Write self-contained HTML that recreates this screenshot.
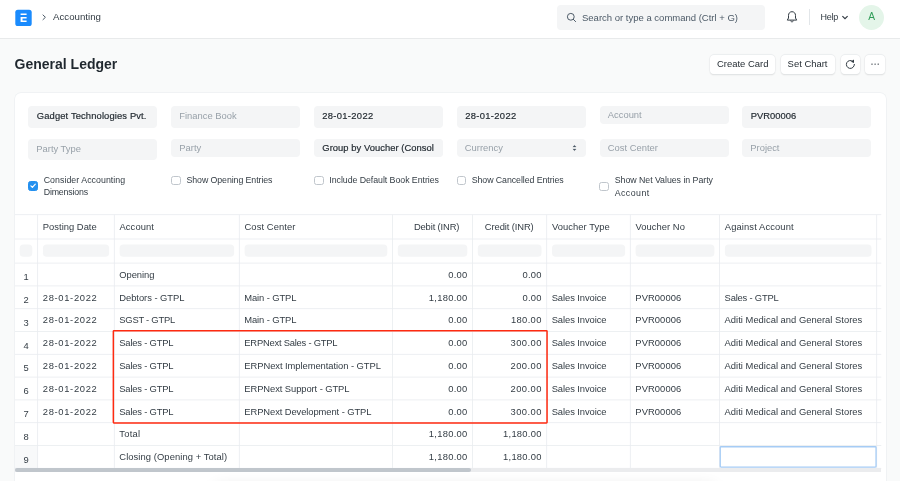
<!DOCTYPE html>
<html><head><meta charset="utf-8"><title>General Ledger</title>
<style>
*{box-sizing:border-box;margin:0;padding:0}
html,body{width:900px;height:481px;overflow:hidden;background:#f9fafa;font-family:"Liberation Sans",sans-serif;font-size:9.4px;color:#1f272e}
.abs,.abs *{position:absolute}
div,span,svg{position:absolute}
.nav{left:0;top:0;width:900px;height:38.5px;background:#fff;border-bottom:1px solid #e8eaeb}
.t{white-space:nowrap;line-height:12px}
.inp{background:#f4f5f6;border-radius:4px;overflow:hidden}
.inp .t{left:8.8px}
.inp .ph{left:8.3px}
.ph{color:#98a1a9}
.val{color:#1f272e;-webkit-text-stroke:0.18px #1f272e}
.btn{background:#fff;border-radius:4px;box-shadow:0 0 0 0.4px #e6e9ec,0 0.6px 1.6px rgba(0,0,0,.13);}
.cb{width:9.5px;height:9.5px;border:1px solid #c0c6cc;border-radius:2.5px;background:#fff}
.card{left:14.5px;top:92.5px;width:871px;height:400px;background:#fff;border-radius:6px;box-shadow:0 0 0 0.7px #edf0f2,0 1px 2px rgba(0,0,0,.04)}
.vl{width:1px;background:#eff1f3}
.hl{height:1px;background:#eff1f3}
.cell{white-space:nowrap;line-height:12px;color:#333c44}
.num{letter-spacing:.36px}
.date{letter-spacing:.62px}
.pill{background:#f4f5f6;border-radius:4px;height:11.9px;top:244.4px}
body{will-change:transform}
</style></head><body>

<div class="nav"></div>
<svg style="left:15px;top:9px" width="18" height="18" viewBox="0 0 18 18"><g transform="translate(0.30 0.70)"><rect width="16.4" height="16.4" rx="2.6" fill="#1a8bfd"/><path d="M5.3 3.9h6v1.4h-6zM5.3 7.2h6v1.7H7.2v1.8h4.1v1.7h-6z" fill="#fff"/></g></svg>
<svg style="left:41px;top:13px" width="7" height="9" viewBox="0 0 7 9"><g transform="translate(0.30 0.30)"><path d="M1.4 1.4L4.1 4 1.4 6.6" fill="none" stroke="#4c5a67" stroke-width="1"/></g></svg>
<span class="t" style="left:53px;top:11.3px;font-size:9.7px;color:#333c44">Accounting</span>
<div class="inp" style="left:557px;top:5px;width:207.5px;height:24.5px;border-radius:4px"></div>
<svg style="left:566px;top:12px" width="11" height="11" viewBox="0 0 11 11"><g transform="translate(0.00 0.00)"><circle cx="4.8" cy="4.8" r="3.4" fill="none" stroke="#4c5a67" stroke-width="1"/><path d="M7.3 7.3L9.6 9.6" stroke="#4c5a67" stroke-width="1" stroke-linecap="round"/></g></svg>
<span class="t" style="left:582px;top:12.1px;font-size:9.5px;color:#4c5a67">Search or type a command (Ctrl + G)</span>
<svg style="left:786px;top:10px" width="12" height="15" viewBox="0 0 12 15"><g transform="translate(0.00 0.50)"><path d="M6 1.2c-2.1 0-3.5 1.6-3.5 3.7v2.6L1.3 9.6h9.4L9.5 7.5V4.9C9.5 2.8 8.1 1.2 6 1.2z" fill="none" stroke="#333c44" stroke-width="1" stroke-linejoin="round"/><path d="M4.8 10.4c.2.7.6 1 1.2 1s1-.3 1.2-1" fill="none" stroke="#333c44" stroke-width="1" stroke-linecap="round"/></g></svg>
<div style="left:809px;top:9px;width:1px;height:16px;background:#e2e6e9"></div>
<span class="t" style="left:820.5px;top:11.4px;font-size:9px;letter-spacing:-0.22px;color:#333c44">Help</span>
<svg style="left:841px;top:14px" width="8" height="7" viewBox="0 0 8 7"><g transform="translate(0.00 0.50)"><path d="M1.4 1.6L4 4.1 6.6 1.6" fill="none" stroke="#333c44" stroke-width="1.2"/></g></svg>
<div style="left:859px;top:4.5px;width:25px;height:25px;border-radius:50%;background:#e4f5e9"></div>
<span class="t" style="left:868.3px;top:11.2px;font-size:10.2px;color:#2f9d58">A</span>
<span class="t" style="left:14.6px;top:55.2px;font-size:14px;line-height:18px;font-weight:bold;color:#1f272e">General Ledger</span>
<div class="btn" style="left:710px;top:54.8px;width:65.20000000000005px;height:18.9px"></div>
<span class="t" style="left:717px;top:58px;font-size:9.45px;color:#1f272e">Create Card</span>
<div class="btn" style="left:780.5px;top:54.8px;width:54.700000000000045px;height:18.9px"></div>
<span class="t" style="left:787.6px;top:58px;font-size:9.45px;color:#1f272e">Set Chart</span>
<div class="btn" style="left:840.8px;top:54.8px;width:19.200000000000045px;height:18.9px"></div>
<div class="btn" style="left:865.4px;top:54.8px;width:19.5px;height:18.9px"></div>
<svg style="left:844px;top:58px" width="13" height="13" viewBox="0 0 13 13"><g transform="translate(0.40 0.40)"><path d="M10 6A4 4 0 1 1 8.5 2.9" fill="none" stroke="#333c44" stroke-width="1" stroke-linecap="round"/><path d="M9.6 1v3.5L6.5 3.4z" fill="#333c44"/></g></svg>
<svg style="left:870px;top:62px" width="10" height="4" viewBox="0 0 10 4"><g transform="translate(0.00 0.70)"><rect x="1.4" y=".9" width="1.2" height="1.2" rx=".3" fill="#333c44"/><rect x="4.5" y=".9" width="1.2" height="1.2" rx=".3" fill="#333c44"/><rect x="7.6" y=".9" width="1.2" height="1.2" rx=".3" fill="#333c44"/></g></svg>
<div class="card"></div>
<div class="inp" style="left:28px;top:105.5px;width:129.3px;height:22.0px"><span class="t val" style="letter-spacing:0.13px;top:4.40px">Gadget Technologies Pvt.</span></div>
<div class="inp" style="left:171px;top:105.5px;width:129.3px;height:22.0px"><span class="t ph" style="top:4.40px">Finance Book</span></div>
<div class="inp" style="left:313.5px;top:105.5px;width:129.3px;height:22.0px"><span class="t val" style="letter-spacing:0.32px;top:4.40px">28-01-2022</span></div>
<div class="inp" style="left:456.5px;top:105.5px;width:129.3px;height:22.0px"><span class="t val" style="letter-spacing:0.32px;top:4.40px">28-01-2022</span></div>
<div class="inp" style="left:599.5px;top:105.5px;width:129.3px;height:18.0px"><span class="t ph" style="top:3.00px">Account</span></div>
<div class="inp" style="left:742px;top:105.5px;width:129.3px;height:22.0px"><span class="t val" style="top:4.40px">PVR00006</span></div>
<div class="inp" style="left:28px;top:138.5px;width:129.3px;height:21.5px"><span class="t ph" style="top:4.75px">Party Type</span></div>
<div class="inp" style="left:171px;top:138.5px;width:129.3px;height:18.0px"><span class="t ph" style="top:3.00px">Party</span></div>
<div class="inp" style="left:313.5px;top:138.5px;width:129.3px;height:18.80000000000001px"><span class="t val" style="letter-spacing:0.05px;top:3.40px">Group by Voucher (Consolidated)</span><div style="right:0;top:0;width:8.5px;height:100%;background:#f4f5f6"></div></div>
<div class="inp" style="left:456.5px;top:138.5px;width:129.3px;height:18.80000000000001px"><span class="t ph" style="top:3.40px">Currency</span><svg style="right:8.5px;top:5.6px" width="5" height="8" viewBox="0 0 5 8"><path d="M.9 2.9L2.5 1.3l1.6 1.6zM.9 5.1L2.5 6.7l1.6-1.6z" fill="#4c5a67" stroke="#4c5a67" stroke-width=".3" stroke-linejoin="round"/></svg></div>
<div class="inp" style="left:599.5px;top:138.5px;width:129.3px;height:18.19999999999999px"><span class="t ph" style="top:3.10px">Cost Center</span></div>
<div class="inp" style="left:742px;top:138.5px;width:129.3px;height:18.19999999999999px"><span class="t ph" style="top:3.10px">Project</span></div>
<div class="cb" style="left:28.3px;top:181.4px;background:#2490ef;border-color:#2490ef"><svg style="left:0px;top:0px" width="8" height="7" viewBox="0 0 8 7"><g transform="translate(0.60 0.80)"><path d="M1.3 3.1l1.5 1.5 2.9-3.2" fill="none" stroke="#fff" stroke-width="1.2" stroke-linecap="round" stroke-linejoin="round"/></g></svg></div>
<span class="t" style="letter-spacing:0.044px;left:43.7px;top:174px;font-size:8.8px;color:#333c44">Consider Accounting</span>
<span class="t" style="letter-spacing:-0.163px;left:43.7px;top:186px;font-size:8.8px;color:#333c44">Dimensions</span>
<div class="cb" style="left:171.3px;top:175.5px"></div>
<span class="t" style="letter-spacing:-0.082px;left:186.5px;top:174px;font-size:8.8px;color:#333c44">Show Opening Entries</span>
<div class="cb" style="left:314px;top:175.5px"></div>
<span class="t" style="letter-spacing:-0.05px;left:329.3px;top:174px;font-size:8.8px;color:#333c44">Include Default Book Entries</span>
<div class="cb" style="left:456.7px;top:175.5px"></div>
<span class="t" style="letter-spacing:-0.068px;left:471.7px;top:174px;font-size:8.8px;color:#333c44">Show Cancelled Entries</span>
<div class="cb" style="left:599.3px;top:181.7px"></div>
<span class="t" style="letter-spacing:-0.036px;left:614.7px;top:174px;font-size:8.8px;color:#333c44">Show Net Values in Party</span>
<span class="t" style="letter-spacing:0.451px;left:614.7px;top:186.5px;font-size:8.8px;color:#333c44">Account</span>
<div style="left:15px;top:445.5px;width:22.6px;height:22.5px;background:#f8f9fa"></div>
<svg style="left:0;top:0" width="900" height="481" viewBox="0 0 900 481"><rect x="15" y="214.30" width="866.3" height="0.8" fill="#e9ecef"/><rect x="15" y="238.60" width="866.3" height="0.8" fill="#e9ecef"/><rect x="15" y="262.70" width="866.3" height="0.8" fill="#e9ecef"/><rect x="15" y="285.50" width="866.3" height="0.8" fill="#e9ecef"/><rect x="15" y="308.30" width="866.3" height="0.8" fill="#e9ecef"/><rect x="15" y="331.10" width="866.3" height="0.8" fill="#e9ecef"/><rect x="15" y="353.90" width="866.3" height="0.8" fill="#e9ecef"/><rect x="15" y="376.70" width="866.3" height="0.8" fill="#e9ecef"/><rect x="15" y="399.50" width="866.3" height="0.8" fill="#e9ecef"/><rect x="15" y="422.30" width="866.3" height="0.8" fill="#e9ecef"/><rect x="15" y="445.10" width="866.3" height="0.8" fill="#e9ecef"/><rect x="15" y="467.90" width="866.3" height="0.8" fill="#e9ecef"/><rect x="37.25" y="214.7" width="0.8" height="253.6" fill="#e9ecef"/><rect x="113.90" y="214.7" width="0.8" height="253.6" fill="#e9ecef"/><rect x="238.90" y="214.7" width="0.8" height="253.6" fill="#e9ecef"/><rect x="392.10" y="214.7" width="0.8" height="253.6" fill="#e9ecef"/><rect x="472.10" y="214.7" width="0.8" height="253.6" fill="#e9ecef"/><rect x="546.30" y="214.7" width="0.8" height="253.6" fill="#e9ecef"/><rect x="629.90" y="214.7" width="0.8" height="253.6" fill="#e9ecef"/><rect x="719.20" y="214.7" width="0.8" height="253.6" fill="#e9ecef"/><rect x="876.30" y="214.7" width="0.8" height="253.6" fill="#e9ecef"/></svg>
<span class="cell" style="letter-spacing:0.016px;left:42.85px;top:220.5px">Posting Date</span>
<span class="cell" style="letter-spacing:0.09px;left:119.5px;top:220.5px">Account</span>
<span class="cell" style="letter-spacing:0.085px;left:244.5px;top:220.5px">Cost Center</span>
<span class="cell" style="letter-spacing:-0.126px;right:440.626px;top:220.5px">Debit (INR)</span>
<span class="cell" style="letter-spacing:-0.104px;right:366.40399999999994px;top:220.5px">Credit (INR)</span>
<span class="cell" style="letter-spacing:0.063px;left:551.9000000000001px;top:220.5px">Voucher Type</span>
<span class="cell" style="letter-spacing:0.042px;left:635.5px;top:220.5px">Voucher No</span>
<span class="cell" style="letter-spacing:0.114px;left:724.8000000000001px;top:220.5px">Against Account</span>
<svg style="left:0;top:0" width="900" height="481" viewBox="0 0 900 481"><rect x="19.70" y="244.6" width="12.60" height="12.05" rx="3.6" fill="#f4f5f6"/><rect x="42.95" y="244.6" width="66.15" height="12.05" rx="3.6" fill="#f4f5f6"/><rect x="119.60" y="244.6" width="114.50" height="12.05" rx="3.6" fill="#f4f5f6"/><rect x="244.60" y="244.6" width="142.70" height="12.05" rx="3.6" fill="#f4f5f6"/><rect x="397.80" y="244.6" width="69.50" height="12.05" rx="3.6" fill="#f4f5f6"/><rect x="477.80" y="244.6" width="63.70" height="12.05" rx="3.6" fill="#f4f5f6"/><rect x="552.00" y="244.6" width="73.10" height="12.05" rx="3.6" fill="#f4f5f6"/><rect x="635.60" y="244.6" width="78.80" height="12.05" rx="3.6" fill="#f4f5f6"/><rect x="724.90" y="244.6" width="146.60" height="12.05" rx="3.6" fill="#f4f5f6"/></svg>
<span class="cell" style="left:23.5px;top:271.2px">1</span>
<span class="cell" style="letter-spacing:-0.049px;left:119.3px;top:268.8px">Opening</span>
<span class="cell" style="letter-spacing:0.236px;right:432.564px;top:268.8px">0.00</span>
<span class="cell" style="letter-spacing:0.236px;right:358.364px;top:268.8px">0.00</span>
<span class="cell" style="left:23.5px;top:294.0px">2</span>
<span class="cell" style="letter-spacing:0.658px;left:42.85px;top:291.6px">28-01-2022</span>
<span class="cell" style="letter-spacing:-0.044px;left:119.3px;top:291.6px">Debtors - GTPL</span>
<span class="cell" style="letter-spacing:-0.103px;left:244.3px;top:291.6px">Main - GTPL</span>
<span class="cell" style="letter-spacing:0.272px;right:432.528px;top:291.6px">1,180.00</span>
<span class="cell" style="letter-spacing:0.236px;right:358.364px;top:291.6px">0.00</span>
<span class="cell" style="letter-spacing:-0.076px;left:551.7px;top:291.6px">Sales Invoice</span>
<span class="cell" style="letter-spacing:0.076px;left:635.3px;top:291.6px">PVR00006</span>
<span class="cell" style="letter-spacing:-0.193px;left:724.6px;top:291.6px">Sales - GTPL</span>
<span class="cell" style="left:23.5px;top:316.8px">3</span>
<span class="cell" style="letter-spacing:0.658px;left:42.85px;top:314.40000000000003px">28-01-2022</span>
<span class="cell" style="letter-spacing:-0.233px;left:119.3px;top:314.40000000000003px">SGST - GTPL</span>
<span class="cell" style="letter-spacing:-0.103px;left:244.3px;top:314.40000000000003px">Main - GTPL</span>
<span class="cell" style="letter-spacing:0.236px;right:432.564px;top:314.40000000000003px">0.00</span>
<span class="cell" style="letter-spacing:0.349px;right:358.251px;top:314.40000000000003px">180.00</span>
<span class="cell" style="letter-spacing:-0.076px;left:551.7px;top:314.40000000000003px">Sales Invoice</span>
<span class="cell" style="letter-spacing:0.076px;left:635.3px;top:314.40000000000003px">PVR00006</span>
<span class="cell" style="letter-spacing:0.019px;left:724.6px;top:314.40000000000003px">Aditi Medical and General Stores</span>
<span class="cell" style="left:23.5px;top:339.59999999999997px">4</span>
<span class="cell" style="letter-spacing:0.658px;left:42.85px;top:337.2px">28-01-2022</span>
<span class="cell" style="letter-spacing:-0.193px;left:119.3px;top:337.2px">Sales - GTPL</span>
<span class="cell" style="letter-spacing:-0.22px;left:244.3px;top:337.2px">ERPNext Sales - GTPL</span>
<span class="cell" style="letter-spacing:0.236px;right:432.564px;top:337.2px">0.00</span>
<span class="cell" style="letter-spacing:0.449px;right:358.15099999999995px;top:337.2px">300.00</span>
<span class="cell" style="letter-spacing:-0.076px;left:551.7px;top:337.2px">Sales Invoice</span>
<span class="cell" style="letter-spacing:0.076px;left:635.3px;top:337.2px">PVR00006</span>
<span class="cell" style="letter-spacing:0.019px;left:724.6px;top:337.2px">Aditi Medical and General Stores</span>
<span class="cell" style="left:23.5px;top:362.4px">5</span>
<span class="cell" style="letter-spacing:0.658px;left:42.85px;top:360.0px">28-01-2022</span>
<span class="cell" style="letter-spacing:-0.193px;left:119.3px;top:360.0px">Sales - GTPL</span>
<span class="cell" style="letter-spacing:-0.052px;left:244.3px;top:360.0px">ERPNext Implementation - GTPL</span>
<span class="cell" style="letter-spacing:0.236px;right:432.564px;top:360.0px">0.00</span>
<span class="cell" style="letter-spacing:0.449px;right:358.15099999999995px;top:360.0px">200.00</span>
<span class="cell" style="letter-spacing:-0.076px;left:551.7px;top:360.0px">Sales Invoice</span>
<span class="cell" style="letter-spacing:0.076px;left:635.3px;top:360.0px">PVR00006</span>
<span class="cell" style="letter-spacing:0.019px;left:724.6px;top:360.0px">Aditi Medical and General Stores</span>
<span class="cell" style="left:23.5px;top:385.2px">6</span>
<span class="cell" style="letter-spacing:0.658px;left:42.85px;top:382.8px">28-01-2022</span>
<span class="cell" style="letter-spacing:-0.193px;left:119.3px;top:382.8px">Sales - GTPL</span>
<span class="cell" style="letter-spacing:-0.076px;left:244.3px;top:382.8px">ERPNext Support - GTPL</span>
<span class="cell" style="letter-spacing:0.236px;right:432.564px;top:382.8px">0.00</span>
<span class="cell" style="letter-spacing:0.449px;right:358.15099999999995px;top:382.8px">200.00</span>
<span class="cell" style="letter-spacing:-0.076px;left:551.7px;top:382.8px">Sales Invoice</span>
<span class="cell" style="letter-spacing:0.076px;left:635.3px;top:382.8px">PVR00006</span>
<span class="cell" style="letter-spacing:0.019px;left:724.6px;top:382.8px">Aditi Medical and General Stores</span>
<span class="cell" style="left:23.5px;top:408.0px">7</span>
<span class="cell" style="letter-spacing:0.658px;left:42.85px;top:405.6px">28-01-2022</span>
<span class="cell" style="letter-spacing:-0.193px;left:119.3px;top:405.6px">Sales - GTPL</span>
<span class="cell" style="letter-spacing:-0.082px;left:244.3px;top:405.6px">ERPNext Development - GTPL</span>
<span class="cell" style="letter-spacing:0.236px;right:432.564px;top:405.6px">0.00</span>
<span class="cell" style="letter-spacing:0.449px;right:358.15099999999995px;top:405.6px">300.00</span>
<span class="cell" style="letter-spacing:-0.076px;left:551.7px;top:405.6px">Sales Invoice</span>
<span class="cell" style="letter-spacing:0.076px;left:635.3px;top:405.6px">PVR00006</span>
<span class="cell" style="letter-spacing:0.019px;left:724.6px;top:405.6px">Aditi Medical and General Stores</span>
<span class="cell" style="left:23.5px;top:430.8px">8</span>
<span class="cell" style="letter-spacing:0.224px;left:119.3px;top:428.40000000000003px">Total</span>
<span class="cell" style="letter-spacing:0.272px;right:432.528px;top:428.40000000000003px">1,180.00</span>
<span class="cell" style="letter-spacing:0.272px;right:358.328px;top:428.40000000000003px">1,180.00</span>
<span class="cell" style="left:23.5px;top:453.59999999999997px">9</span>
<span class="cell" style="letter-spacing:0.077px;left:119.3px;top:451.2px">Closing (Opening + Total)</span>
<span class="cell" style="letter-spacing:0.272px;right:432.528px;top:451.2px">1,180.00</span>
<span class="cell" style="letter-spacing:0.272px;right:358.328px;top:451.2px">1,180.00</span>
<svg style="left:0;top:0" width="900" height="481" viewBox="0 0 900 481"><rect x="720.25" y="446.75" width="155.8" height="20.3" rx=".8" fill="#fff" stroke="#a6ccf5" stroke-width="1.3"/><rect x="113.35" y="330.65" width="433.7" height="92.3" rx=".6" fill="none" stroke="#ff2a10" stroke-width="1.5"/></svg>
<div style="left:15px;top:467.8px;width:866px;height:4px;background:#ebecee"></div>
<div style="left:215px;top:488px;width:500px;height:20px;border-radius:8px;box-shadow:0 0 14px 4px rgba(0,0,0,.08)"></div>
<div style="left:14.5px;top:467.6px;width:456px;height:4.4px;background:#c0c6cc;border-radius:2.5px"></div>
</body></html>
